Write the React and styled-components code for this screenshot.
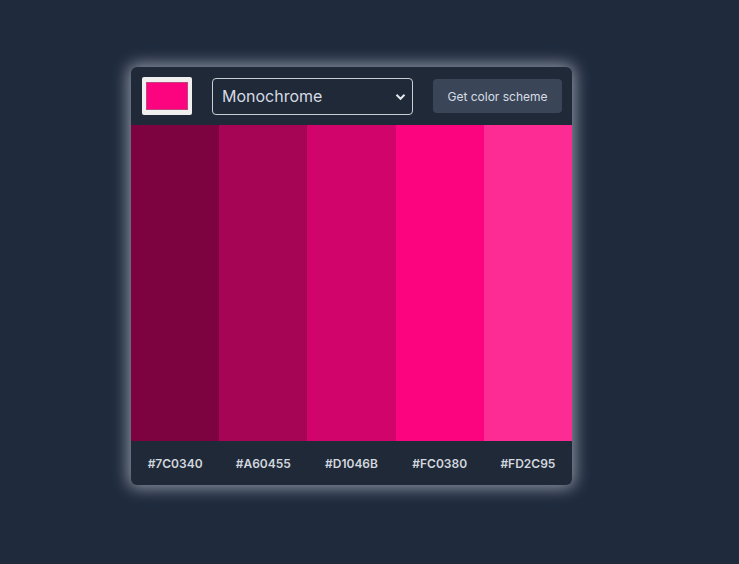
import React, { useState } from "react";
import styled, { createGlobalStyle } from "styled-components";

const Global = createGlobalStyle`
  html, body { margin: 0; padding: 0; background: #1f2a3d; }
  body { font-family: Inter, "Noto Sans", sans-serif; }
`;

const Page = styled.div`
  min-height: 564px;
  padding: 67px 0 0 131px;
  box-sizing: border-box;
`;

const Card = styled.div`
  width: 441px;
  background: #1f2937;
  border-radius: 6px;
  overflow: hidden;
  box-shadow: 0 0 16px 3px rgba(230, 236, 245, 0.55);
  display: flex;
  flex-direction: column;
`;

const Header = styled.div`
  display: flex;
  align-items: center;
  height: 58px;
  padding: 0 10px 0 11px;
  box-sizing: border-box;
`;

const ColorInput = styled.input`
  -webkit-appearance: none;
  appearance: none;
  width: 50px;
  height: 38px;
  padding: 5px 4px;
  border: none;
  border-radius: 2px;
  background: #f0f0f0;
  box-sizing: border-box;
  cursor: pointer;
  &::-webkit-color-swatch-wrapper { padding: 0; }
  &::-webkit-color-swatch { border: 1px solid #c0457a; border-radius: 0; }
`;

const SelectWrap = styled.div`
  position: relative;
  margin-left: 20px;
  width: 201px;
  height: 37px;
`;

const Select = styled.select`
  -webkit-appearance: none;
  appearance: none;
  width: 100%;
  height: 100%;
  background: #1f2937;
  color: #d6dbe3;
  border: 1px solid #c9ced6;
  border-radius: 4px;
  font-family: Inter, "Noto Sans", sans-serif;
  font-size: 16px;
  padding: 0 9px;
  box-sizing: border-box;
  outline: none;
`;

const Chevron = styled.svg`
  position: absolute;
  right: 7px;
  top: 15px;
  pointer-events: none;
`;

const Button = styled.button`
  margin-left: auto;
  height: 34px;
  width: 129px;
  border: none;
  border-radius: 4px;
  background: #3a4658;
  color: #d8dde5;
  font-family: Inter, "Noto Sans", sans-serif;
  font-size: 12px;
  cursor: pointer;
`;

const Swatches = styled.div`
  display: grid;
  grid-template-columns: repeat(5, 1fr);
  height: 316px;
`;

const Swatch = styled.div`
  background: ${(p) => p.$c};
`;

const Footer = styled.div`
  display: grid;
  grid-template-columns: repeat(5, 1fr);
  height: 44px;
  align-items: center;
`;

const Hex = styled.div`
  text-align: center;
  color: #d2d7df;
  font-size: 12px;
  font-weight: 600;
`;

const colors = ["#7C0340", "#A60455", "#D1046B", "#FC0380", "#FD2C95"];

export default function App() {
  const [color, setColor] = useState("#fc0380");
  const [mode, setMode] = useState("monochrome");
  return (
    <>
      <Global />
      <Page>
        <Card>
          <Header>
            <ColorInput type="color" value={color} onChange={(e) => setColor(e.target.value)} />
            <SelectWrap>
              <Select value={mode} onChange={(e) => setMode(e.target.value)}>
                <option value="monochrome">Monochrome</option>
                <option value="monochrome-dark">Monochrome-dark</option>
                <option value="monochrome-light">Monochrome-light</option>
                <option value="analogic">Analogic</option>
                <option value="complement">Complement</option>
              </Select>
              <Chevron width="11" height="8" viewBox="0 0 11 8">
                <path d="M1.5 1.8 L5.5 5.8 L9.5 1.8" fill="none" stroke="#e5e8ee" strokeWidth="2" />
              </Chevron>
            </SelectWrap>
            <Button>Get color scheme</Button>
          </Header>
          <Swatches>
            {colors.map((c) => (
              <Swatch key={c} $c={c} />
            ))}
          </Swatches>
          <Footer>
            {colors.map((c) => (
              <Hex key={c}>{c}</Hex>
            ))}
          </Footer>
        </Card>
      </Page>
    </>
  );
}
